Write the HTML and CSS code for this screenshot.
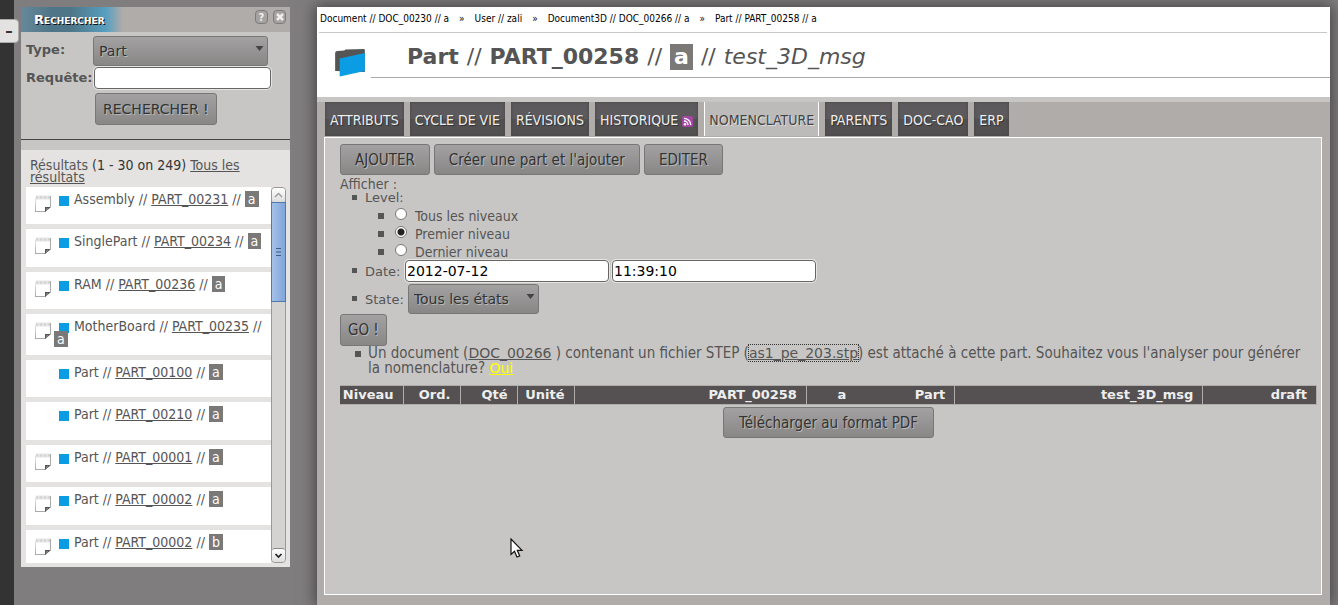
FILE: index.html
```html
<!DOCTYPE html>
<html lang="fr">
<head>
<meta charset="utf-8">
<title>PART_00258 - Nomenclature</title>
<link rel="stylesheet" href="styles.css">
</head>
<body>
<svg class="defs" width="0" height="0" aria-hidden="true">
  <defs>
    <linearGradient id="edge" x1="0" y1="0" x2="0" y2="1"><stop offset="0" stop-color="#eee"/><stop offset="1" stop-color="#aaa"/></linearGradient>
    <symbol id="note" viewBox="0 0 17 18">
      <path d="M1 2.500H15" stroke="#e4e4e4" stroke-width="4"/>
      <path d="M1 2.500H15" stroke="#d2d2d2" stroke-width="2" stroke-dasharray="2 2"/>
      <rect x="0" y="2" width="1" height="14" fill="url(#edge)"/>
      <path d="M0 16.500H11" stroke="#aaa"/>
      <path d="M15.500 1V12" stroke="#aaa"/>
      <path d="M10 17V12H16Z" fill="#555"/>
      <path d="M11.500 15V13.500H13Z" fill="#ccc"/>
    </symbol>
    <symbol id="down" viewBox="0 0 8 5"><path d="M0 0H8L4 5Z" fill="#444"/></symbol>
  </defs>
</svg>
<div class="app">
  <div class="rail"><button class="collapse" type="button" aria-label="Réduire">–</button></div>
  <aside class="side">
    <header class="side-head">
      <h2 class="side-title">Rechercher</h2>
      <div class="side-tools"><button type="button" class="tool">?</button><button type="button" class="tool" aria-label="Fermer"><svg width="8" height="8" viewBox="0 0 8 8"><path d="M1 1L7 7M7 1L1 7" stroke="#eee" stroke-width="2.500"/></svg></button></div>
    </header>
    <form class="search">
      <label for="type">Type:</label>
      <span class="pick pick-wide"><select id="type" class="btn select"><option>Part</option></select><svg class="arrow"><use href="#down"/></svg></span>
      <label for="query">Requête:</label>
      <input id="query" class="field" type="text">
      <button type="button" class="btn search-go">RECHERCHER !</button>
    </form>
    <section class="results">
      <p class="summary">Résultats <span class="count">(1 - 30 on 249)</span> <a href="#">Tous les résultats</a></p>
      <div class="scroll">
        <ul class="list">
          <li><svg class="note"><use href="#note"/></svg><p><i class="sq"></i>Assembly // <a href="#">PART_00231</a> // <b class="rev">a</b></p></li>
          <li><svg class="note"><use href="#note"/></svg><p><i class="sq"></i>SinglePart // <a href="#">PART_00234</a> // <b class="rev">a</b></p></li>
          <li><svg class="note"><use href="#note"/></svg><p><i class="sq"></i>RAM // <a href="#">PART_00236</a> // <b class="rev">a</b></p></li>
          <li><svg class="note"><use href="#note"/></svg><p><i class="sq"></i>MotherBoard // <a href="#">PART_00235</a> // <b class="rev">a</b></p></li>
          <li><p><i class="sq"></i>Part // <a href="#">PART_00100</a> // <b class="rev">a</b></p></li>
          <li><p><i class="sq"></i>Part // <a href="#">PART_00210</a> // <b class="rev">a</b></p></li>
          <li><svg class="note"><use href="#note"/></svg><p><i class="sq"></i>Part // <a href="#">PART_00001</a> // <b class="rev">a</b></p></li>
          <li><svg class="note"><use href="#note"/></svg><p><i class="sq"></i>Part // <a href="#">PART_00002</a> // <b class="rev">a</b></p></li>
          <li><svg class="note"><use href="#note"/></svg><p><i class="sq"></i>Part // <a href="#">PART_00002</a> // <b class="rev">b</b></p></li>
        </ul>
        <div class="bar">
          <div class="bar-end bar-up"><svg width="9" height="6" viewBox="0 0 9 6"><path d="M1 5L4.500 1.500L8 5" fill="none" stroke="#999" stroke-width="1.300"/></svg></div>
          <div class="thumb"><svg width="5" height="8" viewBox="0 0 5 8"><path d="M0 .5H5M0 4H5M0 7.500H5" stroke="#3d5d85"/></svg></div>
          <div class="bar-end bar-down"><svg width="9" height="6" viewBox="0 0 9 6"><path d="M1.500 1L4.500 4L7.500 1" fill="none" stroke="#222" stroke-width="1.700"/></svg></div>
        </div>
      </div>
    </section>
  </aside>
  <main class="main">
    <header class="top">
      <nav class="crumbs"><a href="#">Document // DOC_00230 // a</a><span>»</span><a href="#">User // zali</a><span>»</span><a href="#">Document3D // DOC_00266 // a</a><span>»</span><a href="#">Part // PART_00258 // a</a></nav>
      <div class="heading">
        <svg class="folder" width="32" height="30" viewBox="0 0 28 30" preserveAspectRatio="none"><path d="M1 5Q1 3 3 3L9 2.500L10 1.500L26 1Q27 1 27 2V24L1 23Z" fill="#555"/><path d="M5 10.500L27 5V23L5 28.500Z" fill="#0a9de3"/></svg>
        <h1><strong>Part</strong> // <strong>PART_00258</strong> // <strong class="rev rev-big">a</strong> // <em>test_3D_msg</em></h1>
      </div>
    </header>
    <nav class="tabs">
      <a href="#">ATTRIBUTS</a><a href="#">CYCLE DE VIE</a><a href="#">RÉVISIONS</a><a href="#">HISTORIQUE <svg class="feed" width="11" height="11" viewBox="0 0 11 11"><rect width="11" height="11" rx="2" fill="#a545a5"/><circle cx="3" cy="8.300" r="1.200" fill="#fff"/><path d="M2 5A4 4 0 0 1 6 9M2 2.300A6.700 6.700 0 0 1 8.700 9" fill="none" stroke="#fff" stroke-width="1.300"/></svg></a><a href="#" class="on">NOMENCLATURE</a><a href="#">PARENTS</a><a href="#">DOC-CAO</a><a href="#">ERP</a>
    </nav>
    <section class="panel">
      <div class="actions"><button type="button" class="btn">AJOUTER</button><button type="button" class="btn">Créer une part et l'ajouter</button><button type="button" class="btn">EDITER</button></div>
      <form class="filter">
        <p class="show">Afficher :</p>
        <ul class="opts">
          <li>Level:
            <ul class="levels">
              <li><input type="radio" name="level" id="l1"><label for="l1">Tous les niveaux</label></li>
              <li><input type="radio" name="level" id="l2" checked><label for="l2">Premier niveau</label></li>
              <li><input type="radio" name="level" id="l3"><label for="l3">Dernier niveau</label></li>
            </ul>
          </li>
          <li class="row"><label for="date">Date:</label><input class="field" id="date" type="text" value="2012-07-12"><input class="field" type="text" aria-label="Heure" value="11:39:10"></li>
          <li class="row row-state"><label for="state">State:</label><span class="pick"><select id="state" class="btn select"><option>Tous les états</option></select><svg class="arrow"><use href="#down"/></svg></span></li>
        </ul>
        <button type="button" class="btn go">GO !</button>
      </form>
      <ul class="notice"><li>Un document (<a href="#">DOC_00266</a> ) contenant un fichier STEP (<a href="#" class="focus">as1_pe_203.stp</a>) est attaché à cette part. Souhaitez vous l'analyser pour générer la nomenclature? <a href="#" class="yes">Oui</a></li></ul>
      <table class="bom">
        <thead><tr><th class="c1">Niveau</th><th class="c2">Ord.</th><th class="c2">Qté</th><th class="c2">Unité</th><th class="c3">PART_00258</th><th class="c4">a</th><th class="c5">Part</th><th class="c6">test_3D_msg</th><th>draft</th></tr></thead>
      </table>
      <div class="export"><button type="button" class="btn">Télécharger au format PDF</button></div>
    </section>
  </main>
  <svg class="cursor" width="14" height="21" viewBox="0 0 14 21"><path d="M1 1V16.500L4.500 13.300L7 19L9.700 18L7.300 12.300H12Z" fill="#fff" stroke="#111" stroke-width="1.200"/></svg>
</div>
</body>
</html>
```
FILE: styles.css
```css
* { box-sizing: border-box; }
body {
  margin: 0;
  background: #807d7e;
  color: #555;
  font: 13px/15px "DejaVu Sans", sans-serif;
}
h1, h2, p, ul { margin: 0; padding: 0; }
ul { list-style: none; }
a { color: inherit; }
.defs { position: absolute; }
.app { position: relative; display: flex; align-items: flex-start; min-height: 100vh; overflow: hidden; }

.rail { position: relative; align-self: stretch; width: 14px; margin-right: 7px; background: #333; }
.collapse {
  position: absolute; top: 19px; left: -1px; width: 20px; height: 24px; padding: 0;
  border: 1px solid #aaa; border-radius: 0 4px 4px 0; background: #e4e2e0;
  color: #333; font: bold 15px "DejaVu Sans", sans-serif;
}

.btn {
  height: 31px; padding: 0 12px;
  border: 1px solid #777; border-radius: 3px;
  background: linear-gradient(#a3a1a2, #888786);
  color: #333; font: 15px "DejaVu Sans Condensed", "DejaVu Sans", sans-serif;
  text-shadow: 1px 1px 0 #b8b8b8;
}
.field {
  height: 22px; padding: 0 1px; border: 1px solid #666; border-radius: 4px;
  background: #fff; box-shadow: 0 0 0 1px #e6e5e2;
  color: #000; font: 14px "DejaVu Sans", sans-serif;
}
.pick { position: relative; display: inline-block; }
.select { appearance: none; width: 100%; height: 30px; padding: 0 5px; display: block; font: 14px "DejaVu Sans", sans-serif; }
.arrow { position: absolute; right: 4px; top: 10px; width: 9px; height: 5px; pointer-events: none; }
.rev { padding: 0 3px; background: #7b7978; color: #fff; font-weight: normal; }

.side { width: 269px; margin-top: 7px; background: #c8c6c4; }
.side-head {
  display: flex; justify-content: space-between; height: 25px; padding: 3px 4px 0 13px;
  background: linear-gradient(90deg, #66889a 0, #4f7688 30px, #4f7688 50px, #579fc0 85px, #b0acaa 102px);
}
.side-title {
  color: #fff; font: bold small-caps 13px/20px "DejaVu Sans", sans-serif;
  text-shadow: 1px 1px 0 #111;
}
.side-tools { display: flex; gap: 5px; }
.tool {
  display: grid; place-items: center; width: 13px; height: 14px; padding: 0;
  border: 1px solid #7d7a79; border-radius: 4px; background: #a5a2a0;
  color: #eee; font: bold 10px "DejaVu Sans", sans-serif;
}
.search {
  display: grid; grid-template-columns: 67px 1fr; align-items: center;
  padding: 4px 19px 14px 5px; border-bottom: 1px solid #444;
}
.search label { padding-bottom: 4px; font-weight: bold; }
.pick-wide { margin-right: 3px; }
.search .field { margin: 1px 0 4px 1px; min-width: 0; }
.search-go { grid-column: 2; justify-self: start; height: 32px; margin-left: 2px; padding: 0 7px; font: 14px "DejaVu Sans", sans-serif; }
.results { margin-top: 10px; padding: 9px 4px 4px 5px; background: #e4e3e1; }
.summary, .list, .show, .levels { font-family: "DejaVu Sans Condensed", "DejaVu Sans", sans-serif; font-size: 14px; }
.summary { padding: 0 4px 4px; line-height: 12px; }
.count { color: #333; }
.scroll { display: flex; height: 376px; }
.list { flex: 1; display: flex; flex-direction: column; gap: 5px; overflow: hidden; background: #e4e3e1; }
.list li { position: relative; flex: none; min-height: 37px; padding: 6px 2px 9px 28px; background: #fff; line-height: 13px; }
.list li:nth-child(even) { min-height: 38px; }
.list p { text-indent: 5px; }
.sq { display: inline-block; width: 10px; height: 10px; margin: -2px 5px -2px 0; background: #0a9de3; }
.note { position: absolute; left: 9px; top: 8px; width: 17px; height: 18px; }
.bar { display: flex; flex-direction: column; width: 15px; border: 1px solid #999; border-radius: 4px; background: #d4d3d1; }
.bar-end { display: grid; place-items: center; height: 14px; border-radius: 3px; background: linear-gradient(#fff, #ddd); }
.bar-down { margin-top: auto; border-top: 1px solid #888; }
.thumb { display: grid; place-items: center; height: 100px; margin: 0 -1px; border: 1px solid #5078ac; background: linear-gradient(90deg, #a4c0e8, #80a6da); }

.main {
  flex: 1; align-self: stretch; display: flex; flex-direction: column; min-width: 0;
  margin: 7px 8px 0 27px; background: #b0acaa;
  box-shadow: 0 0 14px 2px #444;
}
.top { height: 95px; border-bottom: 5px solid #c8c6c4; background: #fff; }
.crumbs {
  display: flex; gap: 10px; height: 26px; margin: 0 3px 0 2px; padding: 4px 1px;
  border-bottom: 1px solid #c8c8c8; color: #000;
  font: 10px/15px "DejaVu Sans Condensed", "DejaVu Sans", sans-serif;
}
.crumbs a { text-decoration: none; }
.heading { display: flex; padding: 8px 0 0 17px; }
.folder { margin: 7px 5px 0 0; }
.heading h1 {
  flex: 1; display: flex; align-items: center; gap: 8px; height: 37px; padding: 0 0 5px 36px; border-bottom: 1px solid #aaa;
  font-size: 22px; font-weight: normal; line-height: 26px; white-space: nowrap;
}
.rev-big { padding: 0 4px; font-weight: bold; }
.tabs { display: flex; gap: 6px; height: 35px; padding: 0 8px; }
.tabs a {
  height: 34px; padding: 0 5px; background: linear-gradient(#5c5a5c 50%, #525051 50%);
  box-shadow: inset 0 0 3px #444; color: #eee;
  font: 14px/37px "DejaVu Sans Condensed", "DejaVu Sans", sans-serif; text-decoration: none; white-space: nowrap;
  text-shadow: 1px 1px 0 #333;
}
.tabs .on { padding: 0 4px; border: solid #fff; border-width: 0 1px; background: #bcbbba; box-shadow: none; color: #444; text-shadow: 1px 1px 0 #ddd; }
.feed { vertical-align: -2px; }
.panel { flex: 1; margin: 0 8px 10px 7px; padding: 6px 4px 6px 15px; border: 1px solid #fff; background: #c8c6c4; }
.actions { display: flex; gap: 4px; }
.actions .btn { padding: 0 14px; }
.show { margin-top: 2px; }
.filter { line-height: 15px; }
.opts { padding-left: 25px; margin-top: -2px; }
.opts li { position: relative; }
.opts li::before { content: ""; position: absolute; left: -13px; top: 5px; width: 5px; height: 5px; background: #555; }
.levels { padding-left: 30px; }
.levels li { display: flex; align-items: flex-start; height: 18px; }
.levels li::before { left: -17px; top: 8px; width: 6px; height: 6px; }
.levels input { appearance: none; width: 12px; height: 12px; margin: 3px 8px 0 0; border: 1px solid #777; border-radius: 50%; background: #fff; }
.levels input:checked { background: radial-gradient(circle, #222 0 3px, #fff 4px); }
.levels label { padding-top: 4px; }
.row { display: flex; align-items: center; gap: 3px; margin-top: 1px; }
.row .field { width: 204px; }
.row label { min-width: 37px; }
.opts .row::before { top: 8px; }
.row-state { gap: 4px; margin-top: 2px; }
.opts .row-state::before { top: 12px; }
.row-state .pick { width: 131px; }
.go { padding: 0 7px; height: 32px; }
.notice { padding: 0 8px 0 28px; font: 15px/15px "DejaVu Sans Condensed", "DejaVu Sans", sans-serif; }
.notice li { position: relative; }
.notice a { font: 14px/15px "DejaVu Sans", sans-serif; }
.notice li::before { content: ""; position: absolute; left: -13px; top: 5px; width: 6px; height: 6px; background: #555; }
.focus { outline: 1px dotted #333; }
.notice .yes { color: #ff0; }
.bom { width: 100%; margin-top: 9px; border: 1px solid #b0acaa; border-width: 1px 0; border-collapse: collapse; table-layout: fixed; background: #555152; color: #eee; line-height: 18px; }
.bom th { padding: 0 9px 0 0; border-right: 1px solid #b0acaa; text-align: right; }
.c1 { width: 63px; }
.c2 { width: 57px; }
.c3 { width: 23.8%; }
.c4 { width: 5%; }
.bom .c4 { border-right: 0; }
.c5 { width: 10.2%; }
.c6 { width: 25.4%; }
.export { display: flex; justify-content: center; margin-top: 2px; }
.export .btn { padding: 0 15px; }
.cursor { position: absolute; left: 510px; top: 538px; }
```
